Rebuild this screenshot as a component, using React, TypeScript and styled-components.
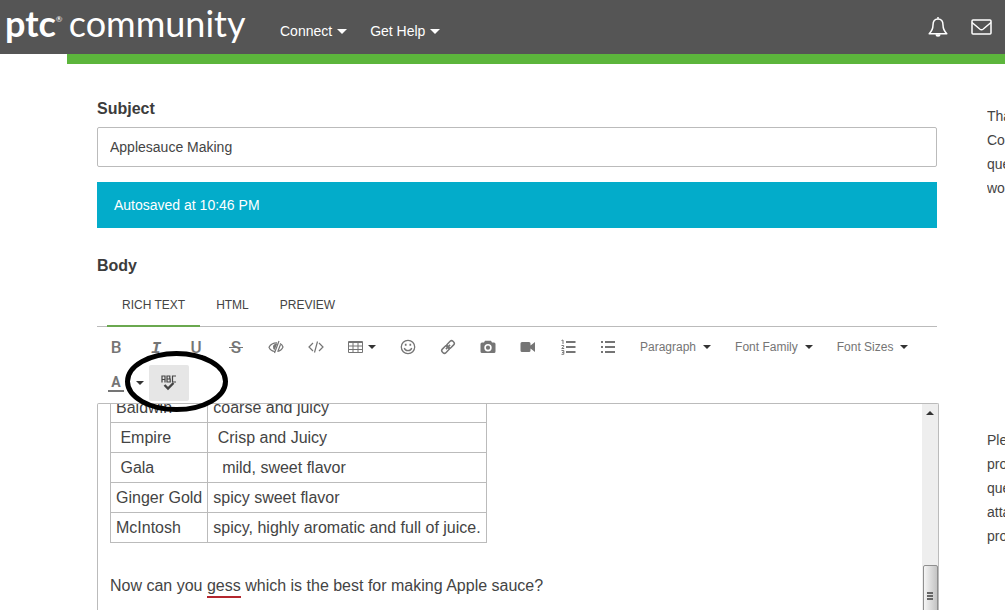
import React from "react";
import styled, { createGlobalStyle } from "styled-components";

const GlobalStyle = createGlobalStyle`
  *, *::before, *::after { box-sizing: border-box; }
  body {
    margin: 0;
    background: #fff;
    color: #444;
    font-family: "Liberation Sans", Arial, sans-serif;
    font-size: 14px;
  }
  button, input { font: inherit; color: inherit; }
`;

const Page = styled.div`
  height: 100vh;
  overflow: hidden;
`;

const Header = styled.header`
  display: flex;
  align-items: center;
  height: 54px;
  padding: 0 13px 0 5px;
  background: #555;
  color: #fff;
`;

const Brand = styled.a`
  display: flex;
  align-items: baseline;
  width: 275px;
  height: 54px;
  color: #fff;
  font-family: Lato, sans-serif;
  font-size: 36px;
  font-weight: 400;
  line-height: 46px;
  text-decoration: none;
  white-space: nowrap;
`;

const BrandMark = styled.span`
  font-weight: 700;
`;

const Registered = styled.sup`
  width: 13px;
  font-size: 8px;
  line-height: 8px;
  align-self: flex-start;
  padding-top: 15px;
`;

const Nav = styled.nav`
  display: flex;
  flex: 1;
  gap: 23px;
  padding-top: 8px;
`;

const Caret = styled.span`
  border: 4px solid transparent;
  border-top-color: currentColor;
  border-bottom: 0;
`;

const NavItem = styled.button`
  display: flex;
  align-items: center;
  gap: 5px;
  padding: 0;
  border: 0;
  background: none;
  line-height: 20px;

  ${Caret} {
    border-width: 5px 5px 0;
  }
`;

const HeaderActions = styled.div`
  display: flex;
  align-items: center;
  gap: 23px;
`;

const HeaderIcon = styled.button`
  display: flex;
  padding: 0;
  border: 0;
  background: none;
`;

const Accent = styled.div`
  height: 10px;
  margin-left: 67px;
  background: #5cb53c;
`;

const Columns = styled.div`
  display: grid;
  grid-template-columns: minmax(0, 1fr) 18px;
  column-gap: 50px;
  padding: 34px 0 0 97px;
`;

const Label = styled.label`
  display: block;
  padding-top: 1px;
  color: #3c3c3c;
  font-size: 16px;
  font-weight: 700;
  line-height: 20px;
`;

const SubjectInput = styled.input`
  display: block;
  width: 100%;
  height: 40px;
  margin-top: 8px;
  padding: 0 12px;
  border: 1px solid #bbb;
  border-radius: 2px;
  background: #fff;
`;

const Notice = styled.div`
  margin: 15px 0 27px;
  padding: 0 17px;
  background: #03acca;
  color: #fff;
  line-height: 46px;
`;

const Tabs = styled.div`
  display: flex;
  gap: 1px;
  height: 44px;
  margin-top: 7px;
  padding-left: 10px;
  border-bottom: 1px solid #bbb;
`;

const Tab = styled.button<{ $active?: boolean }>`
  height: 44px;
  padding: 2px 15px 0;
  border: 0;
  border-bottom: 2px solid ${(p) => (p.$active ? "#6aa84f" : "transparent")};
  background: none;
  font-size: 12px;
`;

const Toolbar = styled.div`
  display: flex;
  flex-wrap: wrap;
  margin: 2px -1px;
  color: #757575;
`;

const Tool = styled.button<{ $wide?: boolean; $active?: boolean }>`
  display: flex;
  align-items: center;
  justify-content: center;
  gap: 5px;
  width: ${(p) => (p.$wide ? "52px" : "40px")};
  height: 36px;
  padding: 0;
  border: 0;
  border-radius: 2px;
  background: ${(p) => (p.$active ? "#e6e6e6" : "none")};
`;

const CaretTool = styled(Tool)`
  justify-content: flex-start;
  width: 13px;
`;

const Dropdown = styled.button`
  display: flex;
  align-items: center;
  gap: 7px;
  height: 36px;
  padding: 0 12px;
  border: 0;
  background: none;
  font-size: 12px;
`;

const DarkCaret = styled(Caret)`
  color: #333;
`;

const Spotlit = styled.div`
  position: relative;
`;

const Ring = styled.svg`
  position: absolute;
  z-index: 2;
  top: -14px;
  left: -24px;
  pointer-events: none;
`;

const Editor = styled.div`
  display: flex;
  height: 222px;
  margin-right: -2px;
  border: 1px solid #bbb;
  border-bottom: 0;
  border-radius: 2px 2px 0 0;
  overflow: hidden;
`;

const Document = styled.div`
  flex: 1;
  padding-left: 12px;
  font-size: 16px;
`;

const Table = styled.table`
  margin-top: -12px;
  border-collapse: collapse;
`;

const Cell = styled.td`
  height: 30px;
  padding: 0 5px;
  border: 1px solid #bbb;
  line-height: 18px;
  white-space: pre;
`;

const Paragraph = styled.p`
  margin: 32px 0 0;
  line-height: 22px;
`;

const Misspelled = styled.span`
  display: inline-block;
  line-height: 20px;
  border-bottom: 2px solid #b3262e;
`;

const Scrollbar = styled.div`
  display: flex;
  flex-direction: column;
  align-items: center;
  width: 16px;
  background: #eee;
`;

const ScrollUp = styled.span`
  flex: 1;
  padding-top: 7px;

  &::before {
    content: "";
    display: block;
    border: 4px solid transparent;
    border-top: 0;
    border-bottom-color: #333;
  }
`;

const Thumb = styled.div`
  width: 15px;
  height: 60px;
  padding: 26px 4px 0 3px;
  border: 1px solid #8f8f8f;
  border-radius: 2px;
  background: linear-gradient(90deg, #f5f5f5, #dcdcdc 50%, #c4c4c4);
`;

const Grip = styled.div`
  height: 2px;
  margin-bottom: 1px;
  background: #666;
`;

const Aside = styled.aside`
  padding-top: 6px;
  line-height: 24px;
  white-space: pre;
  overflow: hidden;
`;

const Tip = styled.p`
  margin: 0 0 228px;
`;

const Letter = ({ children, rule, slanted }: { children: string; rule?: number; slanted?: boolean }) => (
  <svg width="20" height="20" fill="currentColor" stroke="none" aria-hidden="true">
    <text
      x="10"
      y="16"
      textAnchor="middle"
      fontFamily={slanted ? "Liberation Mono" : "Roboto"}
      fontSize="17"
      fontWeight={slanted ? "700" : "500"}
      fontStyle={slanted ? "italic" : "normal"}
    >
      {children}
    </text>
    {rule && <rect x="3" y={rule} width="14" height="1" />}
  </svg>
);

const BellIcon = () => (
  <svg width="20" height="22" viewBox="0 0 20 22" fill="none" stroke="#fff" strokeWidth="1.5">
    <path d="M10 1v2M10 3C6.600 3 5 5.600 5 9c0 4.500-1.500 6.500-3.800 8.700h17.600C16.500 15.500 15 13.500 15 9c0-3.400-1.600-6-5-6Z" strokeLinejoin="round" />
    <path d="M7.500 18.300a2.500 2.500 0 0 0 5 0Z" fill="#fff" stroke="none" />
  </svg>
);

const MailIcon = () => (
  <svg width="21" height="16" viewBox="0 0 21 16" fill="none" stroke="#fff" strokeWidth="1.500">
    <rect x="1" y="1" width="19" height="14" rx="1" />
    <path d="M1 3.500 8.700 10q1.800 1.400 3.600 0L20 3.500" />
  </svg>
);

const EyeOffIcon = () => (
  <svg width="16" height="14" viewBox="0 0 16 14" fill="none" stroke="currentColor" strokeWidth="1.200">
    <path d="M7 11.500C4 11.300 2 9.500 1 7.200 2.600 4.300 5 2.800 9 2.900M12 3.500c1.500.800 2.500 2 3 3.500-1 2.500-3 4-5.600 4.500" />
    <path d="M11 1 6.500 13M12.500 4.500 10 11" />
    <path d="M9.300 3.500 6.700 10A3.500 3.500 0 0 1 5 6.500C5 5 6.500 3.500 9.300 3.500Z" fill="currentColor" stroke="none" />
  </svg>
);

const CodeIcon = () => (
  <svg width="16" height="12" viewBox="0 0 16 12" fill="none" stroke="currentColor" strokeWidth="1.200">
    <path d="M5 2 1 6l4 4M11 2l4 4-4 4M9.500.500l-3 11" />
  </svg>
);

const TableIcon = () => (
  <svg width="15" height="12" viewBox="0 0 15 12" fill="none" stroke="currentColor">
    <path d="M.500.500h14v11H.500ZM.500 1.500h14M.500 5h14M.500 8.500h14M5 1v10.500M10 1v10.500" />
  </svg>
);

const SmileIcon = () => (
  <svg width="16" height="16" viewBox="0 0 16 16" fill="none" stroke="currentColor" strokeWidth="1.300">
    <circle cx="8" cy="8" r="6.700" />
    <path d="M4.300 9c.700 3.400 6.700 3.400 7.400 0" />
    <path d="M5.700 4.700v2M10.300 4.700v2" strokeWidth="1.700" />
  </svg>
);

const LinkIcon = () => (
  <svg width="16" height="16" viewBox="0 0 16 16" fill="none" stroke="currentColor" strokeWidth="1.500">
    <g transform="rotate(-45 8 8)">
      <rect x="0.500" y="5.500" width="8" height="5" rx="2" />
      <rect x="7.500" y="5.500" width="8" height="5" rx="2" />
      <path d="M5 8h6" />
    </g>
  </svg>
);

const CameraIcon = () => (
  <svg width="16" height="14" viewBox="0 0 16 14">
    <path
      fill="currentColor"
      fillRule="evenodd"
      d="M2 2.500h2L5 .700h6l1 1.800h2q1.500 0 1.500 1.500v7.500q0 1.500-1.500 1.500H2Q.500 13 .500 11.500V4Q.500 2.500 2 2.500ZM8 4a3.700 3.700 0 1 0 0 7.400A3.700 3.700 0 1 0 8 4Zm0 1.600a2.100 2.100 0 1 1 0 4.200 2.100 2.100 0 1 1 0-4.200Z"
    />
  </svg>
);

const VideoIcon = () => (
  <svg width="16" height="12" viewBox="0 0 16 12" fill="currentColor">
    <path d="M2 1h7q1.500 0 1.500 1.500V4.500L15 1v10l-4.500-3.500V9.500Q10.500 11 9 11H2Q.500 11 .500 9.500v-7Q.500 1 2 1Z" />
  </svg>
);

const NumberedIcon = () => (
  <svg width="15" height="16" viewBox="0 0 15 16" fill="none" stroke="currentColor">
    <path d="M5 3h9.500M5 8h9.500M5 13h9.500" strokeWidth="1.800" />
    <path d="M.500 1.500 2 1v4M.500 6.500h2.200v1.200L.700 9.500h2.500M.500 11.500h2.300v3.800H.500M1 13.400h1.800" />
  </svg>
);

const BulletIcon = () => (
  <svg width="14" height="14" viewBox="0 0 14 14" fill="none" stroke="currentColor" strokeWidth="1.800">
    <path d="M0 2h2M0 7h2M0 12h2M4 2h10M4 7h10M4 12h10" />
  </svg>
);

const SpellIcon = () => (
  <svg width="18" height="18" viewBox="0 0 18 18" fill="none" stroke="#444">
    <path d="M2 8.500V2h3v6.500M2 5.500h3M7 1.500V8h3.200V5H7h2.800V2H7M16 2h-3.500v6H16" strokeWidth="1.200" />
    <path d="m4.500 11 3.500 3.500 5.500-5.500" strokeWidth="2.400" />
  </svg>
);

const varieties = [
  ["Baldwin", "coarse and juicy"],
  ["\u00a0Empire", "\u00a0Crisp and Juicy"],
  ["\u00a0Gala", "\u00a0\u00a0mild, sweet flavor"],
  ["Ginger Gold", "spicy sweet flavor"],
  ["McIntosh", "spicy, highly aromatic and full of juice."],
];

const App: React.FC = () => (
  <Page>
    <GlobalStyle />
    <Header>
      <Brand href="#">
        <BrandMark>ptc</BrandMark>
        <Registered>®</Registered>
        community
      </Brand>
      <Nav>
        <NavItem>Connect<Caret /></NavItem>
        <NavItem>Get Help<Caret /></NavItem>
      </Nav>
      <HeaderActions>
        <HeaderIcon aria-label="Notifications"><BellIcon /></HeaderIcon>
        <HeaderIcon aria-label="Messages"><MailIcon /></HeaderIcon>
      </HeaderActions>
    </Header>
    <Accent />
    <Columns>
      <main>
        <Label htmlFor="subject">Subject</Label>
        <SubjectInput id="subject" defaultValue="Applesauce Making" />
        <Notice role="status">Autosaved at 10:46 PM</Notice>
        <Label as="div">Body</Label>
        <Tabs role="tablist">
          <Tab role="tab" aria-selected="true" $active>RICH TEXT</Tab>
          <Tab role="tab">HTML</Tab>
          <Tab role="tab">PREVIEW</Tab>
        </Tabs>
        <Toolbar role="toolbar">
          <Tool aria-label="Bold"><Letter>B</Letter></Tool>
          <Tool aria-label="Italic"><Letter slanted>I</Letter></Tool>
          <Tool aria-label="Underline"><Letter rule={18}>U</Letter></Tool>
          <Tool aria-label="Strikethrough"><Letter rule={10}>S</Letter></Tool>
          <Tool aria-label="Spoiler"><EyeOffIcon /></Tool>
          <Tool aria-label="Code"><CodeIcon /></Tool>
          <Tool aria-label="Table" $wide><TableIcon /><DarkCaret /></Tool>
          <Tool aria-label="Emoticons"><SmileIcon /></Tool>
          <Tool aria-label="Link"><LinkIcon /></Tool>
          <Tool aria-label="Photo"><CameraIcon /></Tool>
          <Tool aria-label="Video"><VideoIcon /></Tool>
          <Tool aria-label="Numbered list"><NumberedIcon /></Tool>
          <Tool aria-label="Bulleted list"><BulletIcon /></Tool>
          <Dropdown>Paragraph<DarkCaret /></Dropdown>
          <Dropdown>Font Family<DarkCaret /></Dropdown>
          <Dropdown>Font Sizes<DarkCaret /></Dropdown>
          <Tool aria-label="Text color">
            <svg width="16" height="18" fill="currentColor" aria-hidden="true">
              <text x="8" y="13" textAnchor="middle" fontFamily="Roboto" fontSize="14" fontWeight="700">A</text>
              <rect y="16" width="16" height="2" />
            </svg>
          </Tool>
          <CaretTool aria-label="Choose text color"><DarkCaret /></CaretTool>
          <Spotlit>
            <Tool aria-label="Spell check" $active><SpellIcon /></Tool>
            <Ring width="103" height="61" viewBox="0 0 103 61" fill="none" stroke="#000" strokeWidth="5">
              <ellipse cx="51.500" cy="30.500" rx="49" ry="28" />
            </Ring>
          </Spotlit>
        </Toolbar>
        <Editor>
          <Document>
            <Table>
              <tbody>
                {varieties.map(([name, taste]) => (
                  <tr key={name}>
                    <Cell>{name}</Cell>
                    <Cell>{taste}</Cell>
                  </tr>
                ))}
              </tbody>
            </Table>
            <Paragraph>
              Now can you <Misspelled>gess</Misspelled> which is the best for making Apple sauce?
            </Paragraph>
          </Document>
          <Scrollbar>
            <ScrollUp />
            <Thumb><Grip /><Grip /><Grip /></Thumb>
          </Scrollbar>
        </Editor>
      </main>
      <Aside>
        <Tip>{"Tha\nCo\nque\nwo"}</Tip>
        <Tip>{"Ple\npro\nque\natta\npro"}</Tip>
      </Aside>
    </Columns>
  </Page>
);

export default App;
